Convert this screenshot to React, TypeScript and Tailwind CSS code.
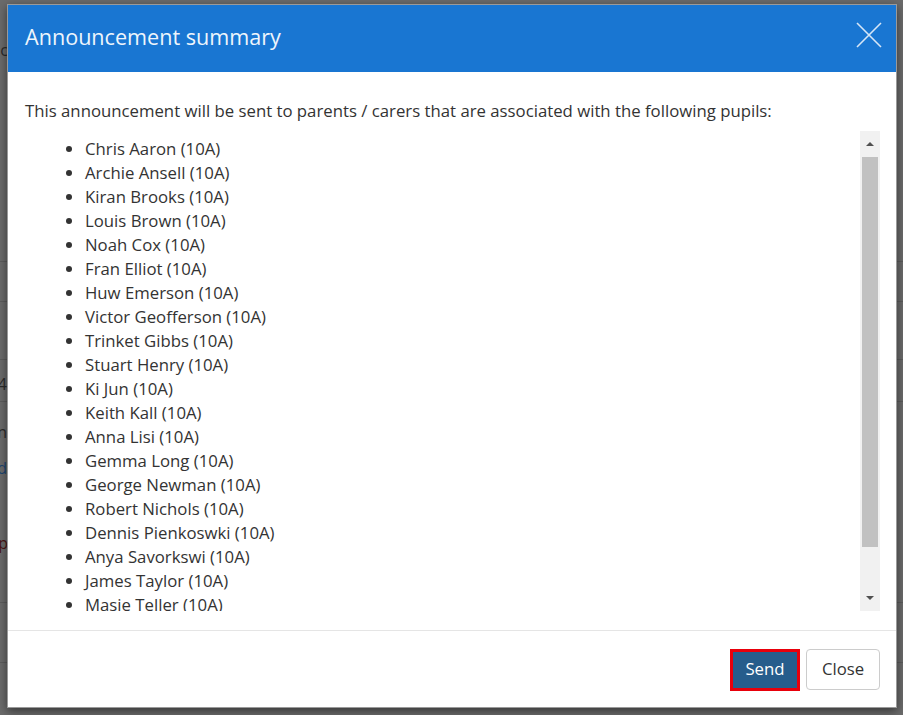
const pupils = [
  "Chris Aaron",
  "Archie Ansell",
  "Kiran Brooks",
  "Louis Brown",
  "Noah Cox",
  "Fran Elliot",
  "Huw Emerson",
  "Victor Geofferson",
  "Trinket Gibbs",
  "Stuart Henry",
  "Ki Jun",
  "Keith Kall",
  "Anna Lisi",
  "Gemma Long",
  "George Newman",
  "Robert Nichols",
  "Dennis Pienkoswki",
  "Anya Savorkswi",
  "James Taylor",
  "Masie Teller",
  "Ellie Turner",
  "Sam Wright",
]

// the dimmed page behind the modal; only a thin strip on the left shows
function BackgroundPage() {
  return (
    <div className="absolute inset-0 flex flex-col text-[16px] text-[#2a2a2a]">
      <div className="h-[262px] border-b border-[#5c5c5c] pt-[38px]">
        <div className="w-[8px] flex justify-end whitespace-nowrap">Summary c</div>
      </div>
      <div className="h-[40px] border-b border-[#5c5c5c]" />
      <div className="h-[58px] border-b border-[#5c5c5c]" />
      <div className="h-[42px] border-b border-[#5c5c5c] pt-[12px]">
        <div className="w-[7px] flex justify-end whitespace-nowrap">2024</div>
      </div>
      <div className="h-[201px] border-b border-[#5c5c5c] pt-[18px] flex flex-col">
        <div className="w-[7px] flex justify-end whitespace-nowrap">Pupils in</div>
        <div className="w-[7px] flex justify-end whitespace-nowrap mt-[12px] text-[#1c4470]">Add</div>
        <div className="w-[8px] flex justify-end whitespace-nowrap mt-[51px] text-[#4a1414]">Stop</div>
      </div>
      <div className="h-[60px] border-b border-[#5c5c5c]" />
      <div className="flex-1" />
    </div>
  )
}

function FakeScrollbar() {
  return (
    <div className="w-[20px] bg-[#f1f1f1] flex flex-col items-center">
      <div className="h-[26px] w-full flex items-center justify-center">
        <div className="w-0 h-0 border-l-[4px] border-r-[4px] border-b-[4px] border-l-transparent border-r-transparent border-b-[#505050]" />
      </div>
      <div className="h-[390px] w-[16px] bg-[#c1c1c1]" />
      <div className="flex-1" />
      <div className="h-[26px] w-full flex items-center justify-center">
        <div className="w-0 h-0 border-l-[4px] border-r-[4px] border-t-[4px] border-l-transparent border-r-transparent border-t-[#505050]" />
      </div>
    </div>
  )
}

export default function App() {
  return (
    <div
      className="relative w-[903px] h-[715px] overflow-hidden bg-[#6b6b6b]"
      style={{ fontFamily: '"Open Sans", "Noto Sans", sans-serif' }}
    >
      <BackgroundPage />

      <div className="absolute left-[7px] top-[4px] w-[890px] h-[704px] bg-white flex flex-col border border-[#9a9a9a] shadow-[0_3px_9px_rgba(0,0,0,0.5)]">
        <div className="h-[67px] bg-[#1976d2] flex items-center justify-between pl-[17px] pr-[14px] pb-[3px]">
          <h2 className="text-[21.6px] text-[#eef5fc] font-normal">Announcement summary</h2>
          <svg width="26" height="26" viewBox="0 0 26 26" className="text-[#d6e6f7] mb-[5px]">
            <path d="M1 1 L25 25 M25 1 L1 25" stroke="currentColor" strokeWidth="1.6" fill="none" />
          </svg>
        </div>

        <div className="flex-1 flex flex-col pt-[27px] pl-[17px] pr-[16px] pb-[19px] text-[16.75px] text-[#333333]">
          <p className="leading-6">
            This announcement will be sent to parents / carers that are associated with the following pupils:
          </p>
          <div className="mt-[8px] h-[480px] flex">
            <div className="flex-1 overflow-hidden pt-[6px]">
              <ul className="list-disc pl-[60px] leading-6">
                {pupils.map((p) => (
                  <li key={p}>{p} (10A)</li>
                ))}
              </ul>
            </div>
            <FakeScrollbar />
          </div>
        </div>

        <div className="border-t border-[#e5e5e5] h-[77px] flex items-start justify-end gap-[6px] pt-[18px] pr-[16px]">
          <div className="border-[3px] border-[#e8000b]">
            <button className="w-[64px] h-[36px] bg-[#265d8c] text-white text-[16.75px] pb-[2px]">Send</button>
          </div>
          <button className="w-[74px] h-[41px] border border-[#cccccc] rounded-[4px] bg-white text-[#333333] text-[16.75px] pb-[2px]">
            Close
          </button>
        </div>
      </div>
    </div>
  )
}
